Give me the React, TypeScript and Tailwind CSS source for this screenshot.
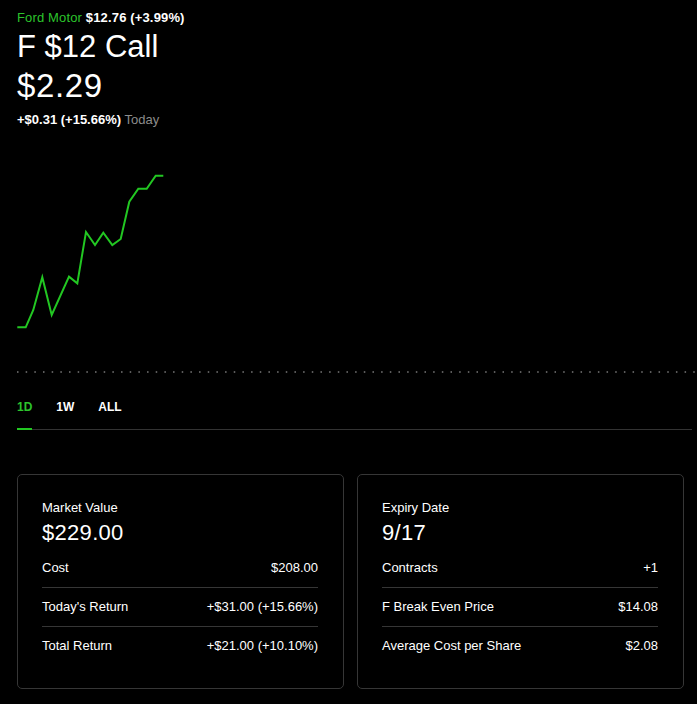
const chartPoints = [
  [17.3, 177.3], [25.7, 177.3], [33.3, 160], [42.3, 127.3], [51.7, 165],
  [69, 126.7], [77.3, 133.3], [86, 82], [95, 95], [103.3, 82.7],
  [112.3, 95], [120.7, 89], [129.3, 51.7], [138.3, 38.7], [146.7, 38.7],
  [155.7, 25.7], [163.3, 25.7],
];

type Row = { label: string; value: string };

type CardProps = {
  title: string;
  headline: string;
  rows: Row[];
};

function StatCard({ title, headline, rows }: CardProps) {
  return (
    <div className="border border-[#363636] rounded-[5px] pl-[24px] pr-[25px] pt-[25px] pb-[23px]">
      <div className="text-[13px] leading-[16px] text-white">{title}</div>
      <div className="mt-[3px] text-[22px] leading-[28px] tracking-[0.3px] text-white">{headline}</div>
      <div className="mt-[1px]">
        {rows.map((r, i) => (
          <div
            key={r.label}
            className={
              "h-[39px] flex items-center justify-between text-[13px] text-white " +
              (i > 0 ? "border-t border-[#363636]" : "")
            }
          >
            <span>{r.label}</span>
            <span>{r.value}</span>
          </div>
        ))}
      </div>
    </div>
  );
}

export default function App() {
  return (
    <div className="w-full min-h-[704px] bg-black text-white font-['Liberation_Sans',Arial,sans-serif]">
      {/* Header */}
      <div className="px-[17px] pt-[10px]">
        <div className="text-[13px] leading-[16px] tracking-[0.15px]">
          <span className="text-[#2cc42c]">Ford Motor</span>{" "}
          <span className="font-bold">$12.76 (+3.99%)</span>
        </div>
        <div className="mt-[4px] text-[31px] leading-[34px]">F $12 Call</div>
        <div className="mt-[4px] text-[33px] leading-[36px] tracking-[0.6px]">$2.29</div>
        <div className="mt-[8px] text-[13px] leading-[16px]">
          <span className="font-bold">+$0.31 (+15.66%)</span>{" "}
          <span className="text-[#8c8c8c]">Today</span>
        </div>
      </div>

      {/* Chart */}
      <svg className="block mt-[22px]" width="697" height="230" viewBox="0 0 697 230">
        <polyline
          points={chartPoints.map((p) => p.join(",")).join(" ")}
          fill="none"
          stroke="#22c722"
          strokeWidth="2"
          strokeLinejoin="miter"
        />
        <line
          x1="17"
          y1="222"
          x2="697"
          y2="222"
          stroke="#7a7a7a"
          strokeWidth="1.5"
          strokeDasharray="1.5 7.17"
        />
      </svg>

      {/* Tabs */}
      <div className="ml-[17px] mr-[5px] mt-[19px] border-b border-[#333333]">
        <div className="flex gap-[24px] text-[12px] leading-[16px] font-bold">
          <div className="pb-[13px] -mb-px border-b-2 border-[#22c722] text-[#2cc42c]">1D</div>
          <div className="pb-[13px]">1W</div>
          <div className="pb-[13px]">ALL</div>
        </div>
      </div>

      {/* Cards */}
      <div className="grid grid-cols-2 gap-[13px] pl-[17px] pr-[13px] mt-[44px] pb-[15px]">
        <StatCard
          title="Market Value"
          headline="$229.00"
          rows={[
            { label: "Cost", value: "$208.00" },
            { label: "Today's Return", value: "+$31.00 (+15.66%)" },
            { label: "Total Return", value: "+$21.00 (+10.10%)" },
          ]}
        />
        <StatCard
          title="Expiry Date"
          headline="9/17"
          rows={[
            { label: "Contracts", value: "+1" },
            { label: "F Break Even Price", value: "$14.08" },
            { label: "Average Cost per Share", value: "$2.08" },
          ]}
        />
      </div>
    </div>
  );
}
